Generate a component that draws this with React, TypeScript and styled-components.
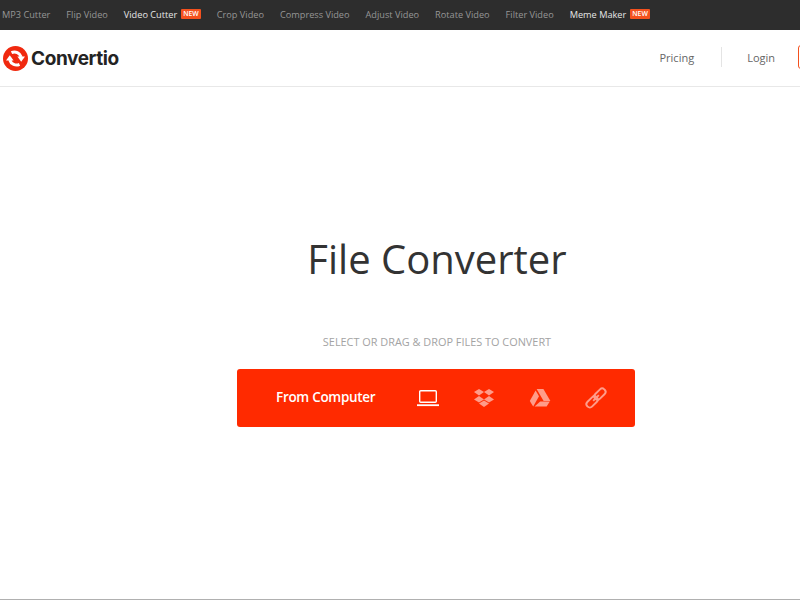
import styled, { createGlobalStyle } from 'styled-components';

const GlobalStyle = createGlobalStyle`
    html, body {
        margin: 0;
        padding: 0;
        background: #fff;
        font-family: 'Open Sans', 'Liberation Sans', sans-serif;
    }
`;

const Page = styled.div`
    display: flex;
    flex-direction: column;
    width: 800px;
    height: 600px;
    overflow: hidden;
    border-bottom: 1px solid #b0b0b0;
    box-sizing: border-box;
`;

const TopBar = styled.nav`
    display: flex;
    align-items: center;
    flex: none;
    gap: 16px;
    height: 30px;
    padding: 0 0 2px 2px;
    background: #2d2d2d;
    box-sizing: border-box;
`;

const TopLink = styled.a<{ $active?: boolean }>`
    display: flex;
    align-items: center;
    color: ${(props) => (props.$active ? '#e6e6e6' : '#969696')};
    font-size: 9.2px;
    white-space: nowrap;
`;

const NewBadge = styled.span`
    margin-left: 4px;
    padding: 0 2px;
    border-radius: 1px;
    background: #f4511e;
    color: #fff;
    font-size: 6.8px;
    font-weight: 600;
    line-height: 10px;
`;

const Header = styled.header`
    display: flex;
    align-items: center;
    justify-content: space-between;
    flex: none;
    width: 872px;
    height: 57px;
    border-bottom: 1px solid #e8e8e8;
    box-sizing: border-box;
`;

const Logo = styled.div`
    display: flex;
    align-items: center;
    gap: 3px;
    padding-left: 3px;
`;

const LogoText = styled.span`
    color: #232323;
    font-family: Inter, 'Liberation Sans', sans-serif;
    font-size: 19px;
    font-weight: 700;
    letter-spacing: -0.4px;
`;

const HeaderNav = styled.div`
    display: flex;
    align-items: center;
    padding-bottom: 2px;
`;

const HeaderLink = styled.a`
    color: #666;
    font-size: 11px;
`;

const Divider = styled.span`
    width: 1px;
    height: 20px;
    margin: 0 25px 0 27px;
    background: #e4e4e4;
`;

const SignUp = styled.a`
    display: block;
    width: 50px;
    height: 22px;
    margin: 0 22px 0 23px;
    border: 1px solid #f4511e;
    border-radius: 3px;
`;

const Hero = styled.main`
    display: flex;
    flex-direction: column;
    align-items: center;
    width: 872px;
    padding-top: 142px;
`;

const Title = styled.h1`
    margin: 0;
    padding-left: 2px;
    color: #333;
    font-size: 40px;
    font-weight: 400;
    line-height: 60px;
`;

const Hint = styled.p`
    margin: 45px 0 0;
    padding-left: 2px;
    color: #a3a3a3;
    font-size: 10.9px;
    line-height: 16px;
`;

const Picker = styled.div`
    display: flex;
    align-items: center;
    width: 398px;
    height: 58px;
    margin-top: 19px;
    padding-left: 39px;
    background: #ff2a00;
    border-radius: 3px;
    box-sizing: border-box;
`;

const PickerLabel = styled.span`
    flex: none;
    width: 140px;
    padding-bottom: 2px;
    color: #fff;
    font-size: 13.5px;
    font-weight: 600;
    letter-spacing: -0.3px;
    white-space: nowrap;
`;

const PickerIcon = styled.span`
    display: flex;
    align-items: center;
    justify-content: center;
    flex: none;
    width: 24px;
    height: 24px;
    margin-right: 32px;

    &:last-child {
        margin-right: 0;
    }
`;

function LogoMark() {
    return (
        <svg width="25" height="25" viewBox="0 0 25 25">
            <circle cx="12.5" cy="12.5" r="12.5" fill="#f0290f" />
            <g fill="none" stroke="#fff" strokeWidth="3">
                <path d="M8.5 6.6A7 7 0 0 1 18.2 11" />
                <path d="M14.4 10.5h7.6l-3.8 5.2z" fill="#fff" stroke="none" />
            </g>
            <g transform="rotate(180 12.5 12.5)" fill="none" stroke="#fff" strokeWidth="3">
                <path d="M8.5 6.6A7 7 0 0 1 18.2 11" />
                <path d="M14.4 10.5h7.6l-3.8 5.2z" fill="#fff" stroke="none" />
            </g>
        </svg>
    );
}

function LaptopIcon() {
    return (
        <svg width="24" height="20" viewBox="0 0 24 20" fill="none" stroke="#fff" strokeWidth="1.4">
            <rect x="3.7" y="2.7" width="16.6" height="11.6" rx="1" />
            <path d="M1 17.2h22" strokeWidth="1.8" />
        </svg>
    );
}

function DropboxIcon() {
    return (
        <svg width="22" height="20" viewBox="0 0 22 20" fill="#ff9c8a">
            <path d="M6 1l5 3-5 3.4L1 4z" />
            <path d="M16 1l5 3-5 3.4L11 4z" />
            <path d="M6 8l5 3.4L6 14.6 1 11.4z" />
            <path d="M16 8l5 3.4-5 3.2-5-3.2z" />
            <path d="M11 12.6l5 3-5 3.4-5-3.4z" />
        </svg>
    );
}

function DriveIcon() {
    return (
        <svg width="22" height="20" viewBox="0 0 22 20" fill="#ff9c8a">
            <path d="M7.6 1h6.8l7 12h-6.8z" />
            <path d="M6.6 2.4L10 8.2 4.2 18.6 .8 13z" />
            <path d="M11.2 13.6h9.6l-3.2 5H5.6z" />
        </svg>
    );
}

function LinkIcon() {
    return (
        <svg width="24" height="24" viewBox="0 0 24 24" overflow="visible" fill="none" stroke="#ff9c8a" strokeWidth="1.9">
            <g transform="rotate(-45 12 12)">
                <rect x="0" y="8.7" width="13" height="6.6" rx="3" />
                <rect x="11" y="8.7" width="13" height="6.6" rx="3" />
                <path d="M8 12h8" />
            </g>
        </svg>
    );
}

const topLinks = [
    { label: 'MP3 Cutter' },
    { label: 'Flip Video' },
    { label: 'Video Cutter', active: true, isNew: true },
    { label: 'Crop Video' },
    { label: 'Compress Video' },
    { label: 'Adjust Video' },
    { label: 'Rotate Video' },
    { label: 'Filter Video' },
    { label: 'Meme Maker', active: true, isNew: true },
];

function App() {
    return (
        <Page>
            <GlobalStyle />
            <TopBar>
                {topLinks.map((link) => (
                    <TopLink key={link.label} $active={link.active}>
                        {link.label}
                        {link.isNew && <NewBadge>NEW</NewBadge>}
                    </TopLink>
                ))}
            </TopBar>
            <Header>
                <Logo>
                    <LogoMark />
                    <LogoText>Convertio</LogoText>
                </Logo>
                <HeaderNav>
                    <HeaderLink>Pricing</HeaderLink>
                    <Divider />
                    <HeaderLink>Login</HeaderLink>
                    <SignUp />
                </HeaderNav>
            </Header>
            <Hero>
                <Title>File Converter</Title>
                <Hint>SELECT OR DRAG &amp; DROP FILES TO CONVERT</Hint>
                <Picker>
                    <PickerLabel>From Computer</PickerLabel>
                    <PickerIcon>
                        <LaptopIcon />
                    </PickerIcon>
                    <PickerIcon>
                        <DropboxIcon />
                    </PickerIcon>
                    <PickerIcon>
                        <DriveIcon />
                    </PickerIcon>
                    <PickerIcon>
                        <LinkIcon />
                    </PickerIcon>
                </Picker>
            </Hero>
        </Page>
    );
}

export default App;
